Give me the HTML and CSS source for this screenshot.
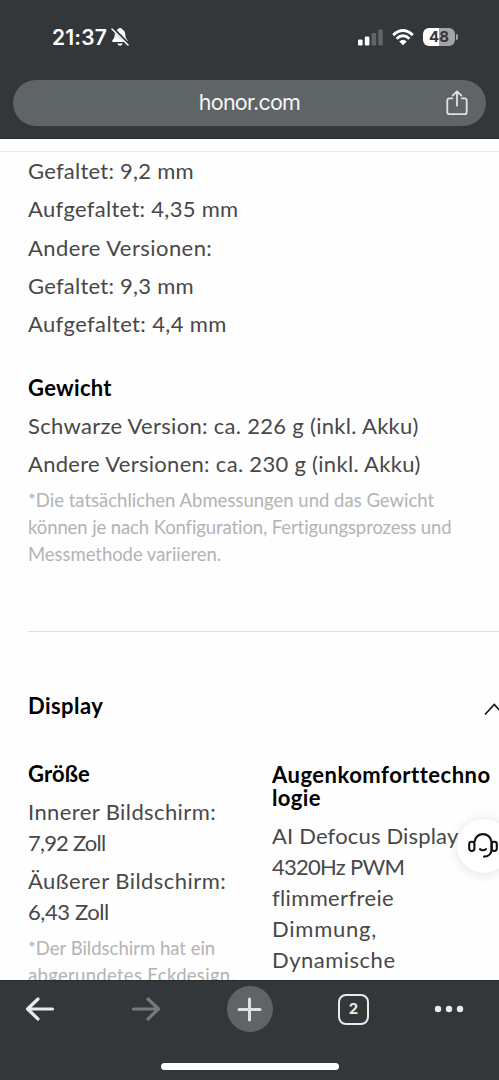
FILE: index.html
```
<!DOCTYPE html>
<html lang="de">
<head>
<meta charset="utf-8">
<title>honor.com</title>
<link rel="stylesheet" href="styles.css">
</head>
<body>
<div class="phone">
  <header class="chrome-top">
    <div class="status">
      <div class="clock"><span>21:37</span>
        <svg class="bell" width="18" height="20" viewBox="0 0 18 20"><path d="M1.2 14.3C1 13 3.4 12 3.6 8.5C3.8 4.5 5 3 7.1 2.2C7.4.5 10.6.5 10.9 2.2C13 3 14.2 4.5 14.4 8.5C14.6 12 17 13 16.8 14.3Q16.7 15 16 15H2Q1.3 15 1.2 14.3ZM6.3 16.5H11.7Q11 18.7 9 18.7T6.3 16.5Z" fill="#fff"/><path d="M1.6 1.4 17.6 17.4" stroke="#343739" stroke-width="3.2"/><path d="M1 2 17 18" stroke="#fff" stroke-width="1.5" stroke-linecap="round"/></svg>
      </div>
      <div class="signals">
        <svg width="25" height="17" viewBox="0 0 25 17"><rect x="0" y="10.5" width="4.6" height="6" rx="1.3" fill="#fff"/><rect x="6.8" y="7.5" width="4.6" height="9" rx="1.3" fill="#fff"/><rect x="13.6" y="4" width="4.6" height="12.5" rx="1.3" fill="#626466"/><rect x="20.2" y=".5" width="4.6" height="16" rx="1.3" fill="#626466"/></svg>
        <svg width="22" height="17" viewBox="0 0 22 17"><g fill="none" stroke="#fff" stroke-width="2.9"><path d="M1.2 6.1Q11-3 20.8 6.1"/><path d="M4.6 9.7Q11 3.9 17.4 9.7"/></g><path d="M7.2 12.5Q11 9.2 14.8 12.5L11 16.3Z" fill="#fff"/></svg>
        <div class="battery"><span class="cell">48</span><i class="nub"></i></div>
      </div>
    </div>
    <div class="address"><span class="host">honor.com</span>
      <svg class="share" width="22" height="26" viewBox="0 0 22 26" fill="none" stroke="#dfe1e5" stroke-width="1.8" stroke-linecap="round" stroke-linejoin="round"><path d="M6.3 8.3H3.6Q1.3 8.3 1.3 10.6V21.9Q1.3 24.2 3.6 24.2H18.4Q20.7 24.2 20.7 21.9V10.6Q20.7 8.3 18.4 8.3H15.7M11 15.7V1.5M6.6 5.6 11 1.3 15.4 5.6"/></svg>
    </div>
  </header>
  <main class="page">
    <section class="weights">
      <p class="row"><span class="t1">Gefaltet: 9,2 mm</span></p>
      <p class="row"><span class="t2">Aufgefaltet: 4,35 mm</span></p>
      <p class="row"><span class="t3">Andere Versionen:</span></p>
      <p class="row"><span class="t4">Gefaltet: 9,3 mm</span></p>
      <p class="row"><span class="t5">Aufgefaltet: 4,4 mm</span></p>
      <h3 class="heading weight-title"><span class="t6">Gewicht</span></h3>
      <p class="row"><span class="t7">Schwarze Version: ca. 226 g (inkl. Akku)</span></p>
      <p class="row"><span class="t8">Andere Versionen: ca. 230 g (inkl. Akku)</span></p>
      <p class="note"><span class="t9">*Die tatsächlichen Abmessungen und das Gewicht</span><br><span class="t10">können je nach Konfiguration, Fertigungsprozess und</span><br><span class="t11">Messmethode variieren.</span></p>
    </section>
    <section class="display">
      <div class="display-head"><h2 class="heading"><span class="t12">Display</span></h2>
        <svg class="chevron" width="15" height="14" viewBox="0 0 15 14"><path d="M1 12.5 10.3 2.5 19.6 12.5" fill="none" stroke="#111" stroke-width="1.6"/></svg>
      </div>
      <div class="columns">
        <div class="size">
          <h3 class="heading"><span class="t13">Größe</span></h3>
          <p class="row"><span class="t14">Innerer Bildschirm:</span><br><span class="t15">7,92 Zoll</span></p>
          <p class="row"><span class="t16">Äußerer Bildschirm:</span><br><span class="t17">6,43 Zoll</span></p>
          <p class="note"><span class="t18">*Der Bildschirm hat ein</span><br><span class="t19">abgerundetes Eckdesign.</span></p>
        </div>
        <div>
          <h3 class="heading comfort"><span class="t20">Augenkomforttechno</span><br><span class="t21">logie</span></h3>
          <p class="row"><span class="t22">AI Defocus Display</span><br><span class="t23">4320Hz PWM</span><br><span class="t24">flimmerfreie</span><br><span class="t25">Dimmung,</span><br><span class="t26">Dynamische</span></p>
        </div>
      </div>
    </section>
    <div class="support"><svg width="30" height="26" viewBox="0 0 30 26" fill="none" stroke="#111" stroke-width="2.1" stroke-linecap="round" stroke-linejoin="round"><rect x="1.2" y="8.7" width="5.2" height="9.3" rx="2.4"/><rect x="23.6" y="8.7" width="5.2" height="9.3" rx="2.4"/><path d="M6.4 9.2C7.5-1.6 22.5-1.6 23.6 9.2V16C23.4 21 20.5 23.6 16 23.6M12 16.2Q15 18.3 18 16.2"/></svg></div>
  </main>
  <footer class="chrome-bottom">
    <nav class="toolbar">
      <svg class="back" width="30" height="24" viewBox="0 0 30 24" fill="none" stroke="#e8eaed" stroke-width="3.2" stroke-linecap="round" stroke-linejoin="round"><path d="M27.5 12H2.5M13 2 2.5 12 13 22"/></svg>
      <svg width="30" height="24" viewBox="0 0 30 24" fill="none" stroke="#77797b" stroke-width="3.2" stroke-linecap="round" stroke-linejoin="round"><path d="M2.5 12H27.5M17 2 27.5 12 17 22"/></svg>
      <div class="new-tab"><svg width="25" height="25" viewBox="0 0 25 25" stroke="#dfe1e5" stroke-width="3" stroke-linecap="round"><path d="M2 12.5H23M12.5 2V23"/></svg></div>
      <div class="tabs">2</div>
      <svg class="more" width="30" height="8" viewBox="0 0 30 8" fill="#e8eaed"><circle cx="4" cy="4" r="3.2"/><circle cx="15" cy="4" r="3.2"/><circle cx="26" cy="4" r="3.2"/></svg>
    </nav>
    <div class="home-bar"></div>
  </footer>
</div>
</body>
</html>
```
FILE: styles.css
```
* { box-sizing: border-box; }
body { margin: 0; font-family: Lato, "Noto Sans", sans-serif; font-variant-ligatures: none; }
p, h2, h3 { margin: 0; }
svg { display: block; flex: none; }
.phone { width: 499px; height: 1080px; display: flex; flex-direction: column; overflow: hidden; background: #fefefe; }
.chrome-top { flex: none; height: 139px; background: #343739; border-bottom: 1px solid #292c2e; font-family: Inter, sans-serif; }
.status { height: 80px; padding: 6px 41px 0 52px; display: flex; align-items: center; justify-content: space-between; }
.clock { display: flex; align-items: center; gap: 4px; color: #fff; font-size: 21px; font-weight: 600; line-height: 24px; height: 36px; margin-top: -11px; letter-spacing: .2px; }
.bell { margin-top: -1px; }
.signals { display: flex; align-items: center; gap: 9px; height: 36px; margin-top: -12px; }
.battery { display: flex; align-items: center; gap: 1px; }
.cell { width: 32px; height: 18px; border-radius: 6px; background: linear-gradient(90deg, #fff 49%, #a2a4a5 49%); color: #343739; font-size: 15px; font-weight: 700; line-height: 18px; text-align: center; }
.nub { width: 2px; height: 6px; border-radius: 0 3px 3px 0; background: #a2a4a5; }
.address { position: relative; height: 46px; margin: 0 13px; border-radius: 23px; background: #5f6467; display: flex; align-items: center; justify-content: center; }
.host { color: #f4f5f6; font-size: 21.5px; line-height: 28px; margin-top: -2px; letter-spacing: -.75px; }
.share { position: absolute; right: 18px; top: 10px; }
.page { position: relative; flex: 1; min-height: 0; overflow: hidden; border-top: 1px solid #fff; }
.weights { margin-top: 11px; padding: 3px 0 63px 28px; border-top: 1px solid #e8e8e8; }
.row { font-size: 22px; line-height: 31px; margin-bottom: 7.3px; color: #484848; white-space: nowrap; }
.heading { font-size: 22px; line-height: 27px; font-weight: 700; color: #000; margin-bottom: 9px; white-space: nowrap; }
.weight-title { margin-top: 34.5px; }
.note { padding-top: 1px; font-size: 18.5px; line-height: 27px; color: #b3b3b3; white-space: nowrap; }
.display { margin-left: 28px; padding-top: 60px; border-top: 1px solid #dedede; }
.display-head { display: flex; justify-content: space-between; height: 68px; }
.chevron { margin-top: 10px; }
.columns { display: grid; grid-template-columns: 244px 1fr; }
.size .row { margin-bottom: 6.7px; }
.comfort { line-height: 23px; padding-top: 3px; margin-bottom: 11px; }
.t1, .t4 { letter-spacing: .25px; }
.t2 { letter-spacing: .3px; }
.t3 { letter-spacing: .44px; }
.t5 { letter-spacing: .37px; }
.t6, .t7, .t8 { letter-spacing: .3px; }
.t10 { letter-spacing: -.1px; }
.t11 { letter-spacing: -.05px; }
.t12 { letter-spacing: .43px; }
.t13 { letter-spacing: .1px; }
.t14 { letter-spacing: .4px; }
.t15 { letter-spacing: -.8px; }
.t16 { letter-spacing: .45px; }
.t17 { letter-spacing: -.4px; }
.t19 { letter-spacing: .3px; }
.t20 { letter-spacing: .5px; }
.t21 { letter-spacing: .4px; }
.t22 { letter-spacing: .17px; }
.t23 { letter-spacing: -.75px; }
.t24 { letter-spacing: .35px; }
.t25 { letter-spacing: .75px; }
.t26 { letter-spacing: .5px; }
.support { position: absolute; left: 457px; top: 679px; width: 54px; height: 54px; border-radius: 50%; background: #fff; box-shadow: 0 1px 12px rgba(0,0,0,.12); display: flex; align-items: center; padding-left: 11px; }
.chrome-bottom { flex: none; height: 100px; background: #343739; border-top: 1px solid #292c2e; }
.toolbar { height: 56px; padding-left: 25px; display: flex; align-items: center; gap: 65.5px; }
.back { margin-right: 10px; }
.new-tab { flex: none; width: 46px; height: 46px; border-radius: 50%; background: #5f6467; display: flex; align-items: center; justify-content: center; margin-left: .5px; }
.tabs { flex: none; width: 31px; height: 31px; border: 2.5px solid #e8eaed; border-radius: 8px; color: #e8eaed; font: 700 15px/26px Inter, sans-serif; text-align: center; }
.more { margin-left: -.5px; }
.home-bar { width: 178px; height: 7px; border-radius: 4px; background: #fff; margin: 26px auto 0; }
```
